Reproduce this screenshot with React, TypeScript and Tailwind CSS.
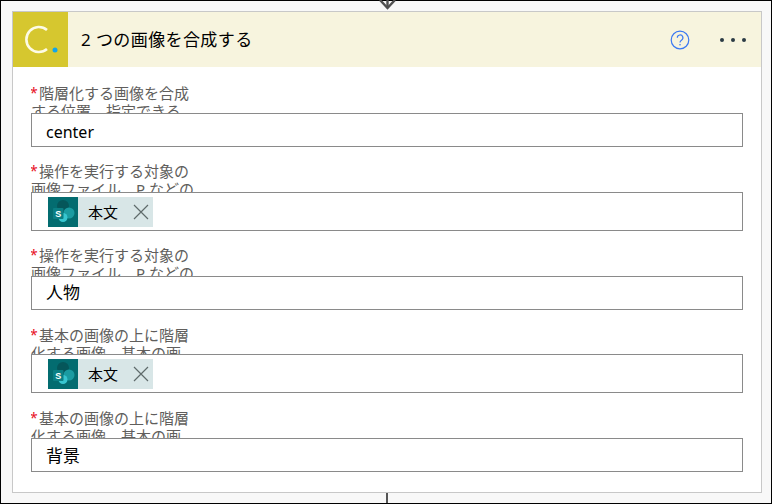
const FONT = "font-['Noto_Sans','Noto_Sans_CJK_JP',sans-serif]";

function Chip() {
  return (
    <div className="flex h-[30px] w-[105px] items-center bg-[#d8e6e7]">
      <svg className="shrink-0" width="30" height="30" viewBox="0 0 30 30">
        <rect width="30" height="30" fill="#036c70" />
        <circle cx="15" cy="9" r="6" fill="#05565a" />
        <circle cx="21" cy="16" r="5.5" fill="#1a9ba1" />
        <circle cx="15" cy="20.5" r="4.5" fill="#37c6d0" />
        <rect x="5" y="11" width="10.5" height="11" rx="1" fill="#0b7f84" />
        <text x="10.2" y="20" textAnchor="middle" fontSize="9" fontWeight="700" fill="#ffffff" fontFamily="Liberation Sans">S</text>
      </svg>
      <span className="ml-[10px] w-[30px] text-[15px] leading-[20px] text-black">本文</span>
      <svg className="ml-[15px]" width="16" height="16" viewBox="0 0 16 16" fill="none" stroke="#5f6a6b" strokeWidth="1.2">
        <path d="M1 1 L15 15 M15 1 L1 15" />
      </svg>
    </div>
  );
}

function Field({ l1, l2, gap, labelH, h, children, chip, value }: { l1: string; l2: string; gap: string; labelH: string; h: string; children?: React.ReactNode; chip?: boolean; value?: string }) {
  return (
    <div className={gap}>
      <div className={`w-[165px] overflow-hidden text-[15px] leading-[18px] text-[#605e5c] ${labelH}`}>
        <div className="flex">
          <span className="ml-[-1px] w-[9px] text-[14px] text-[#e81123]">*</span>
          <span>{l1}</span>
        </div>
        <div>{l2}</div>
      </div>
      <div className={`flex w-[712px] items-center border border-[#8a8a8a] bg-white ${h} ${chip ? "pl-[16px]" : "pl-[14px] text-black"} ${value ?? ""}`}>
        {children}
      </div>
    </div>
  );
}

export default function App() {
  return (
    <div className={`h-[504px] w-[772px] overflow-hidden border border-black bg-[#f8f8f8] ${FONT}`}>
      <div className="relative ml-[11px] mt-[10px] h-[482px] w-[750px] border border-[#c8c8c8] bg-white">
        <div className="flex h-[55px] items-center bg-[#f7f4de]">
          <div className="relative flex h-[55px] w-[55px] items-center justify-center bg-[#d6c72f]">
            <svg width="55" height="55" viewBox="0 0 55 55" fill="none">
              <path d="M34 18 A12.5 12.5 0 1 0 34 37" stroke="#fdfbe6" strokeWidth="2.6" />
              <circle cx="42" cy="38" r="2.5" fill="#12a5ea" />
            </svg>
          </div>
          <div className="ml-[13px] text-[17px] tracking-[0.4px] text-black">2 つの画像を合成する</div>
          <div className="ml-auto flex items-center">
            <svg width="20" height="20" viewBox="0 0 20 20" fill="none">
              <circle cx="10" cy="10" r="8.8" stroke="#3a78f2" strokeWidth="1.2" />
              <path d="M7.3 7.8 A2.8 2.8 0 1 1 11.5 10.2 C10.4 10.9 10 11.4 10 12.6" stroke="#3a78f2" strokeWidth="1.2" />
              <circle cx="10" cy="14.8" r="0.8" fill="#3a78f2" />
            </svg>
            <div className="ml-[30px] mr-[15px] flex gap-[7px]">
              <span className="h-[4px] w-[4px] rounded-full bg-[#2b3a44]" />
              <span className="h-[4px] w-[4px] rounded-full bg-[#2b3a44]" />
              <span className="h-[4px] w-[4px] rounded-full bg-[#2b3a44]" />
            </div>
          </div>
        </div>
        <div className="pl-[18px] pt-[17px]">
          <Field l1="階層化する画像を合成" l2="する位置。指定できる" gap="" labelH="h-[29px]" h="h-[34px]" value="text-[16px] pt-[3px]">center</Field>
          <Field l1="操作を実行する対象の" l2="画像ファイル。P などの" gap="mt-[15px]" labelH="h-[30px]" h="h-[39px]" chip><Chip /></Field>
          <Field l1="操作を実行する対象の" l2="画像ファイル。P などの" gap="mt-[15px]" labelH="h-[30px]" h="h-[34px]" value="text-[17px]">人物</Field>
          <Field l1="基本の画像の上に階層" l2="化する画像。基本の画" gap="mt-[16px]" labelH="h-[28px]" h="h-[39px]" chip><Chip /></Field>
          <Field l1="基本の画像の上に階層" l2="化する画像。基本の画" gap="mt-[16px]" labelH="h-[29px]" h="h-[34px]" value="text-[17px] pt-[1px]">背景</Field>
        </div>
      </div>
      <div className="relative">
        <div className="absolute left-[384.5px] top-0 h-[10px] w-[2px] bg-[#555]" />
      </div>
      <svg className="absolute left-[378px] top-0" width="20" height="11" viewBox="0 0 20 11" fill="none" stroke="#505050" strokeWidth="2.4">
        <path d="M2 0 L9.5 8 L17 0" />
        <path d="M9.5 0 V8" />
      </svg>
    </div>
  );
}
